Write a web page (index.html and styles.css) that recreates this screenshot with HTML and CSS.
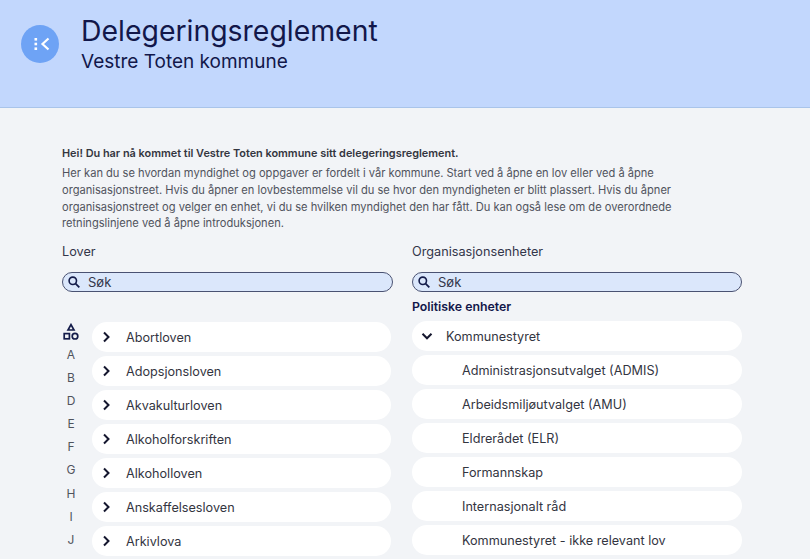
FILE: index.html
```html
<!DOCTYPE html>
<html lang="no">
<head>
<meta charset="utf-8">
<title>Delegeringsreglement</title>
<link rel="stylesheet" href="styles.css">
</head>
<body>
<header class="header">
  <button class="back" aria-label="Tilbake">
    <svg width="16" height="14" viewBox="0 0 16 14"><g fill="#fff"><rect x="0.5" y="1" width="2.6" height="2.6"/><rect x="0.5" y="5.7" width="2.6" height="2.6"/><rect x="0.5" y="10.4" width="2.6" height="2.6"/></g><path d="M14.5 1.5 8.5 7l6 5.5" fill="none" stroke="#fff" stroke-width="2.2"/></svg>
  </button>
  <div class="titles">
    <h1>Delegeringsreglement</h1>
    <p>Vestre Toten kommune</p>
  </div>
</header>
<main class="main">
  <section class="intro">
    <h2>Hei! Du har nå kommet til Vestre Toten kommune sitt delegeringsreglement.</h2>
    <p>Her kan du se hvordan myndighet og oppgaver er fordelt i vår kommune. Start ved å åpne en lov eller ved å åpne organisasjonstreet. Hvis du åpner en lovbestemmelse vil du se hvor den myndigheten er blitt plassert. Hvis du åpner organisasjonstreet og velger en enhet, vi du se hvilken myndighet den har fått. Du kan også lese om de overordnede retningslinjene ved å åpne introduksjonen.</p>
  </section>
  <div class="columns">
    <section class="col col-left">
      <h3>Lover</h3>
      <div class="search">
        <svg width="14" height="14" viewBox="0 0 14 14"><circle cx="5.8" cy="5.8" r="3.7" fill="none" stroke="#141c4a" stroke-width="1.6"/><path d="M8.6 8.6 12.3 12.3" stroke="#141c4a" stroke-width="1.8"/></svg>
        <span>Søk</span>
      </div>
      <div class="lawbody">
        <nav class="alpha">
          <svg class="shapes" width="16" height="18" viewBox="0 0 16 18"><path d="M8 1.6 11 7H5z" fill="none" stroke="#141c4a" stroke-width="1.7"/><rect x="1.2" y="10.6" width="5.2" height="5.2" fill="none" stroke="#141c4a" stroke-width="1.7"/><circle cx="12" cy="13.2" r="2.8" fill="none" stroke="#141c4a" stroke-width="1.7"/></svg>
          <span>A</span><span>B</span><span>D</span><span>E</span><span>F</span><span>G</span><span>H</span><span>I</span><span>J</span>
        </nav>
        <ul class="rows laws">
          <li class="row"><svg class="chev" width="12" height="12" viewBox="0 0 12 12"><path d="M4 1.5 8.5 6 4 10.5" fill="none" stroke="#14162e" stroke-width="2"/></svg>Abortloven</li>
          <li class="row"><svg class="chev" width="12" height="12" viewBox="0 0 12 12"><path d="M4 1.5 8.5 6 4 10.5" fill="none" stroke="#14162e" stroke-width="2"/></svg>Adopsjonsloven</li>
          <li class="row"><svg class="chev" width="12" height="12" viewBox="0 0 12 12"><path d="M4 1.5 8.5 6 4 10.5" fill="none" stroke="#14162e" stroke-width="2"/></svg>Akvakulturloven</li>
          <li class="row"><svg class="chev" width="12" height="12" viewBox="0 0 12 12"><path d="M4 1.5 8.5 6 4 10.5" fill="none" stroke="#14162e" stroke-width="2"/></svg>Alkoholforskriften</li>
          <li class="row"><svg class="chev" width="12" height="12" viewBox="0 0 12 12"><path d="M4 1.5 8.5 6 4 10.5" fill="none" stroke="#14162e" stroke-width="2"/></svg>Alkoholloven</li>
          <li class="row"><svg class="chev" width="12" height="12" viewBox="0 0 12 12"><path d="M4 1.5 8.5 6 4 10.5" fill="none" stroke="#14162e" stroke-width="2"/></svg>Anskaffelsesloven</li>
          <li class="row"><svg class="chev" width="12" height="12" viewBox="0 0 12 12"><path d="M4 1.5 8.5 6 4 10.5" fill="none" stroke="#14162e" stroke-width="2"/></svg>Arkivlova</li>
        </ul>
      </div>
    </section>
    <section class="col col-right">
      <h3>Organisasjonsenheter</h3>
      <div class="search">
        <svg width="14" height="14" viewBox="0 0 14 14"><circle cx="5.8" cy="5.8" r="3.7" fill="none" stroke="#141c4a" stroke-width="1.6"/><path d="M8.6 8.6 12.3 12.3" stroke="#141c4a" stroke-width="1.8"/></svg>
        <span>Søk</span>
      </div>
      <h4>Politiske enheter</h4>
      <ul class="rows units">
        <li class="row parent"><svg class="chev" width="12" height="12" viewBox="0 0 12 12"><path d="M1.5 3.8 6 8.3l4.5-4.5" fill="none" stroke="#14162e" stroke-width="2"/></svg>Kommunestyret</li>
        <li class="row child">Administrasjonsutvalget (ADMIS)</li>
        <li class="row child">Arbeidsmiljøutvalget (AMU)</li>
        <li class="row child">Eldrerådet (ELR)</li>
        <li class="row child">Formannskap</li>
        <li class="row child">Internasjonalt råd</li>
        <li class="row child">Kommunestyret - ikke relevant lov</li>
      </ul>
    </section>
  </div>
</main>
</body>
</html>
```
FILE: styles.css
```css
* { box-sizing: border-box; }
html, body { margin: 0; height: 100%; overflow: hidden; }
body {
  background: #f2f4f7;
  font-family: Inter, "Liberation Sans", sans-serif;
  color: #2b2d3a;
}
.header {
  height: 108px;
  background: #c2d7fd;
  border-bottom: 1px solid #a9c4ea;
  display: flex;
  align-items: flex-start;
  padding: 14px 0 0 21px;
}
.back {
  width: 38px;
  height: 38px;
  margin-top: 11px;
  border: 0;
  border-radius: 50%;
  background: #6ea3f5;
  padding: 0 0 0 3px;
  display: flex;
  align-items: center;
  justify-content: center;
}
.titles { margin-left: 22px; color: #12174a; }
.titles h1 { margin: 0; font-size: 28.4px; line-height: 34px; font-weight: 400; }
.titles p { margin: 1px 0 0; font-size: 19px; line-height: 26px; }
.main { padding: 37px 0 0 62px; }
.intro { width: 620px; }
.intro h2 { margin: 0; font-size: 10.9px; line-height: 16px; font-weight: 600; color: #34363f; }
.intro p { margin: 4px 0 0; font-size: 11.12px; line-height: 16.75px; color: #50535d; }
.columns { display: flex; gap: 19px; margin-top: 11px; }
.col-left { width: 331px; }
.col-right { width: 330px; }
.col h3 { margin: 0; font-size: 12.7px; line-height: 18px; font-weight: 400; color: #33364a; }
.search {
  margin-top: 11px;
  height: 20px;
  display: flex;
  align-items: center;
  gap: 7px;
  padding-left: 4px;
  background: #dbe7fb;
  border: 1px solid #4a5272;
  border-radius: 10px;
  font-size: 13px;
  color: #33364a;
}
.lawbody { display: flex; margin-top: 30px; }
.alpha {
  width: 30px;
  flex: none;
  display: flex;
  flex-direction: column;
  align-items: center;
  padding-right: 12px;
  font-size: 12px;
  color: #50535d;
}
.alpha span { height: 23.1px; line-height: 23.1px; width: 18px; text-align: center; }
.shapes { height: 18px; margin-top: 1px; margin-bottom: 2px; }
.rows { list-style: none; margin: 0; padding: 0; display: flex; flex-direction: column; gap: 4px; }
.laws { width: 299px; }
.row {
  height: 30px;
  background: #fff;
  border-radius: 15px;
  display: flex;
  align-items: center;
  font-size: 12.65px;
  color: #33353f;
}
.laws .row { padding-left: 8px; }
.laws .chev { margin-right: 14px; }
.col-right h4 { margin: 6px 0 0; font-size: 12.3px; line-height: 17px; font-weight: 600; color: #12174a; }
.units { margin-top: 6px; }
.parent { padding-left: 9px; }
.parent .chev { margin-right: 13px; }
.child { padding-left: 50px; }
```
